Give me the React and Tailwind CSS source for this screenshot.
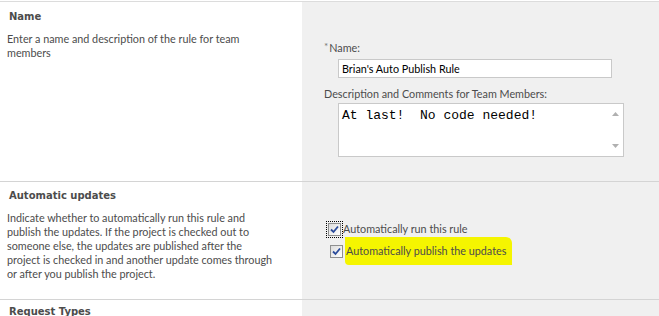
import React from 'react';

const sans = { fontFamily: 'Lato, "Liberation Sans", sans-serif' };
const head = { fontFamily: '"DejaVu Sans", sans-serif', fontSize: '10px' };

function CheckBox({ focused }) {
  return (
    <span className={`inline-flex items-center justify-center p-[1px] ${focused ? 'outline outline-1 outline-dotted outline-black' : ''}`}>
      <span className="w-[13px] h-[13px] border border-[#8e8f8f] bg-gradient-to-br from-[#dcdcdc] to-[#ffffff] flex items-center justify-center">
        <svg width="9" height="9" viewBox="0 0 9 9">
          <path d="M1 4.5 L3.5 7 L8 1.5" fill="none" stroke="#2a4b9b" strokeWidth="1.8" />
        </svg>
      </span>
    </span>
  );
}

export default function App() {
  return (
    <div className="w-[659px] h-[316px] overflow-hidden bg-white text-[#4c4c4c]" style={sans}>
      <div className="h-[2px] border-b border-[#dcdcdc]" />
      <div className="flex h-[179px]">
        <div className="w-[302px] pl-[7px] pr-[40px] pt-[7px]">
          <h3 className="font-bold pl-[2px]" style={head}>Name</h3>
          <p className="text-[10.8px] leading-[14px] mt-[8px]">Enter a name and description of the rule for team members</p>
        </div>
        <div className="flex-1 bg-[#f0f0f0] pl-[22px] pt-[39px]">
          <div className="text-[10.8px] leading-[14px] flex">
            <span className="text-[#777] text-[10px] mr-[1px] mt-[-2px]">*</span>
            <span>Name:</span>
          </div>
          <input
            readOnly
            value="Brian's Auto Publish Rule"
            className="ml-[14px] mt-[3px] w-[274px] h-[19px] border border-[#c9c9c9] bg-white px-[3px] text-[10.8px] text-black outline-none"
            style={sans}
          />
          <div className="text-[10.8px] leading-[14px] mt-[8px]">Description and Comments for Team Members:</div>
          <div className="ml-[14px] mt-[2px] w-[286px] h-[54px] border border-[#c9c9c9] bg-white flex">
            <div className="flex-1 pl-[3px] pt-[2px] text-[13px] text-black whitespace-pre" style={{ fontFamily: '"Liberation Mono", monospace' }}>At last!  No code needed!</div>
            <div className="w-[16px] flex flex-col justify-between items-center py-[8px]">
              <svg width="7" height="4" viewBox="0 0 7 4"><path d="M0 4 L3.5 0 L7 4 Z" fill="#b0b0b0" /></svg>
              <svg width="7" height="4" viewBox="0 0 7 4"><path d="M0 0 L3.5 4 L7 0 Z" fill="#b0b0b0" /></svg>
            </div>
          </div>
        </div>
      </div>
      <div className="h-px bg-[#d4d4d4]" />
      <div className="flex h-[117px]">
        <div className="w-[302px] pl-[7px] pt-[6px]">
          <h3 className="font-bold pl-[2px]" style={head}>Automatic updates</h3>
          <p className="w-[270px] text-[10.8px] leading-[14px] mt-[8px]">Indicate whether to automatically run this rule and publish the updates. If the project is checked out to someone else, the updates are published after the project is checked in and another update comes through or after you publish the project.</p>
        </div>
        <div className="flex-1 bg-[#f0f0f0] pl-[25px] pt-[38px]">
          <div className="flex items-center h-[18px] text-[10.8px]">
            <CheckBox focused />
            <span className="ml-[1px]">Automatically run this rule</span>
          </div>
          <div className="flex items-center h-[24px] text-[10.8px] pl-[2px] mt-[1px]">
            <CheckBox />
            <span className="ml-[1px] bg-[#f5f500] pl-[1px] pr-[6px] py-[6px] rounded-tr-[6px] rounded-bl-[4px]">Automatically publish the updates</span>
          </div>
        </div>
      </div>
      <div className="h-px bg-[#d4d4d4]" />
      <div className="flex">
        <div className="w-[302px] pl-[9px] pt-[4px]">
          <h3 className="font-bold" style={head}>Request Types</h3>
        </div>
        <div className="flex-1 bg-[#f0f0f0] h-[20px]" />
      </div>
    </div>
  );
}
